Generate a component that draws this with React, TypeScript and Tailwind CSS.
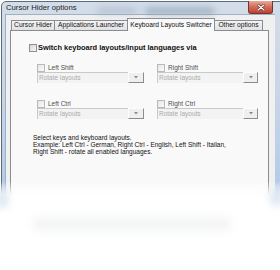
import React from "react";

function Check({ dim }: { dim?: boolean }) {
  return (
    <span
      className={
        dim
          ? "block w-[8px] h-[8px] border border-[#b9b9b9] bg-gradient-to-br from-[#e6e6e6] to-[#fbfbfb]"
          : "block w-[8px] h-[8px] border border-[#8e8f8f] bg-gradient-to-br from-[#d6d6d6] to-[#f7f7f7]"
      }
    />
  );
}

function Combo({ field, btn }: { field: number; btn: number }) {
  return (
    <div className="flex h-[11px]">
      <div
        className="h-full border-t border-l border-[#c9c9c9] bg-[#f3f3f3] pl-[1px] flex items-center text-[6.5px] text-[#ababab] leading-none"
        style={{ width: field }}
      >
        Rotate layouts
      </div>
      <div
        className="h-full border border-t-[#fdfdfd] border-l-[#fdfdfd] border-r-[#8c8c8c] border-b-[#8c8c8c] bg-[#efefef] flex items-center justify-center"
        style={{ width: btn }}
      >
        <svg width="4" height="3" viewBox="0 0 4 3">
          <path d="M0 0h4L2 2.5z" fill="#8a8a8a" />
        </svg>
      </div>
    </div>
  );
}

function KeyGroup({ label, field, btn }: { label: string; field: number; btn: number }) {
  return (
    <div className="flex flex-col">
      <div className="flex items-center gap-[3px] h-[8px]">
        <Check dim />
        <span className="text-[6.5px] leading-none text-[#4f4f4f]">{label}</span>
      </div>
      <Combo field={field} btn={btn} />
    </div>
  );
}

function Tab({ label, w, active }: { label: string; w: number; active?: boolean }) {
  return (
    <div
      className={
        active
          ? "relative z-10 -ml-px mb-[-1px] h-[13px] border border-b-0 border-[#898c95] bg-[#f9f9f9] flex items-center justify-center text-[6.7px] leading-none text-[#111]"
          : "-ml-px first:ml-0 h-[10px] border border-b-0 border-[#898c95] bg-gradient-to-b from-[#f3f3f3] to-[#e2e2e2] flex items-center justify-center text-[6.7px] leading-none text-[#111]"
      }
      style={{ width: w }}
    >
      {label}
    </div>
  );
}

export default function App() {
  return (
    <div className="relative w-[280px] h-[270px] bg-white overflow-hidden font-['Liberation_Sans',Arial,sans-serif]">
      {/* window */}
      <div className="ml-[1px] mt-[1px] w-[290px] h-[205px] rounded-t-[5px] border border-[#5d6b7d] bg-gradient-to-b from-[#d3dde9] via-[#c6d5e6] to-[#b0c9e6] flex flex-col pl-[3px]">
        {/* title bar */}
        <div className="relative h-[18px] w-[268px] flex items-start">
          <span className="absolute left-[92px] top-[5px] w-[40px] h-[7px] rounded-full bg-[#9fb0c4]/50 blur-[3px]" />
          <span className="absolute left-[140px] top-[5px] w-[70px] h-[8px] rounded-full bg-[#8e9fb3]/60 blur-[3px]" />
          <span className="relative self-center pl-[1px] text-[7.7px] leading-none text-[#1b1b1b]">Cursor Hider options</span>
          <div className="relative ml-auto w-[25px] h-[13px] -mt-px rounded-b-[3px] border border-t-0 border-[#74352c] bg-gradient-to-b from-[#e9a899] via-[#d26a58] to-[#c2402f] flex items-center justify-center">
            <svg width="8" height="7" viewBox="0 0 8 7">
              <path d="M1 1l6 5M7 1L1 6" stroke="#5a241d" strokeWidth="2.4" strokeLinecap="round" />
              <path d="M1 1l6 5M7 1L1 6" stroke="#ffffff" strokeWidth="1.3" strokeLinecap="round" />
            </svg>
          </div>
        </div>

        {/* client area */}
        <div className="w-[270px] flex-1 border-t border-l border-[#9fb0c5] bg-[#f0f0f0] pt-[3px] pl-[4px]">
          <div className="flex items-end h-[12px] pl-[1px]">
            <Tab label="Cursor Hider" w={44} />
            <Tab label="Applications Launcher" w={74} />
            <Tab label="Keyboard Layouts Switcher" w={88} active />
            <Tab label="Other options" w={49} />
          </div>

          <div className="w-[259px] h-[200px] border border-[#898c95] bg-[#f9f9f9] pl-[18px] pt-[13px]">
            <div className="flex items-center gap-[1px] h-[8px]">
              <Check />
              <span className="text-[7.45px] leading-none font-bold text-[#111]">
                Switch keyboard layouts/input languages via
              </span>
            </div>

            <div className="ml-[8px] mt-[12px] grid grid-cols-[120px_120px] gap-y-[17px]">
              <KeyGroup label="Left Shift" field={91} btn={16} />
              <KeyGroup label="Right Shift" field={86} btn={15} />
              <KeyGroup label="Left Ctrl" field={91} btn={16} />
              <KeyGroup label="Right Ctrl" field={86} btn={15} />
            </div>

            <div className="ml-[4px] mt-[15px] text-[6.5px] leading-[7px] text-[#111]">
              <p>Select keys and keyboard layouts.</p>
              <p>Example: Left Ctrl - German, Right Ctrl - English, Left Shift - Italian,</p>
              <p>Right Shift - rotate all enabled languages.</p>
            </div>
          </div>
        </div>
      </div>

      {/* fade-out reflection */}
      <div className="absolute left-0 right-0 top-[181px] bottom-0 bg-[linear-gradient(to_bottom,rgba(255,255,255,0)_0px,#ffffff_14px)]" />
      <div className="absolute left-[-4px] top-[190px] w-[12px] h-[18px] rounded-full bg-[#c2d3e8]/60 blur-[4px]" />
      <div className="absolute right-[-4px] top-[188px] w-[14px] h-[18px] rounded-full bg-[#c2d3e8]/60 blur-[4px]" />
      <div className="absolute left-[32px] top-[218px] w-[200px] h-[12px] rounded-full bg-[#e6e8eb]/50 blur-[5px]" />
    </div>
  );
}
